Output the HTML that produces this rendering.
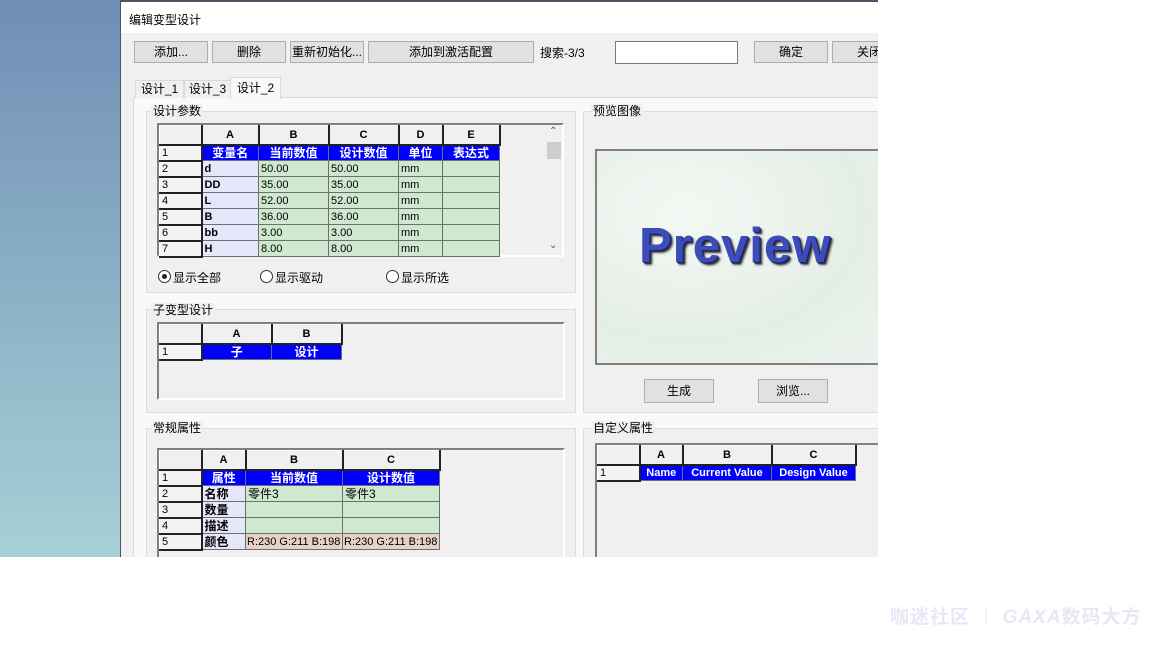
<!DOCTYPE html>
<html><head><meta charset="utf-8"><style>
*{margin:0;padding:0;box-sizing:border-box}
body{width:1152px;height:648px;background:#fff;position:relative;overflow:hidden;font-family:"Liberation Sans","Noto Sans CJK SC",sans-serif;font-size:12px;color:#000}
.bg{position:absolute;left:0;top:0;width:121px;height:557px;background:linear-gradient(#6f8eb5,#a6d0d6)}
.win{position:absolute;left:120px;top:0;width:758px;height:557px;background:#f0f0f0;border-left:1px solid #4a5566;border-top:2px solid #4a5566;overflow:hidden}
.title{position:absolute;left:0;top:0;width:100%;height:31px;background:#fff}
.a{position:absolute}
.btn{position:absolute;height:22px;background:#e1e1e1;border:1px solid #adadad;text-align:center;line-height:20px;font-size:12px}
.grp{position:absolute;border:1px solid #dcdcdc;background:#f0f0f0}
.glab{position:absolute;background:#f0f0f0;padding:0 2px;font-size:12px;line-height:14px}
table{position:absolute;border-collapse:collapse;table-layout:fixed;font-size:11px}
td{border:1px solid #6e6e6e;height:16px;padding:0 2px;white-space:nowrap;overflow:hidden;line-height:14px}
td.h{background:#f0f0f0;text-align:center;font-weight:bold;border-left:1px solid #fff;border-top:1px solid #fff;border-right:2px solid #222;border-bottom:2px solid #222;height:19px}
td.r{background:#f4f4f4;border-left:1px solid #fff;border-top:1px solid #fff;border-right:2px solid #222;border-bottom:2px solid #222}
td.b{background:#0000ff;color:#fff;font-weight:bold;text-align:center;font-size:12px}
td.l{background:#e6e6fa;font-weight:bold}
td.g{background:#cfe8d0}
td.c{background:#e6d3c6}
.gridbox{position:absolute;background:#f0f0f0;border:2px solid #808080;border-right-color:#fff;border-bottom-color:#fff}
.radio{position:absolute;width:13px;height:13px;border:1px solid #333;border-radius:50%;background:#fff}
</style></head><body>
<div class="bg"></div>
<div class="win">
 <div class="title"></div>
 <div class="a" style="left:8px;top:9px;font-size:12px">编辑变型设计</div>
 <div class="btn" style="left:13px;top:39px;width:74px">添加...</div>
 <div class="btn" style="left:91px;top:39px;width:74px">删除</div>
 <div class="btn" style="left:169px;top:39px;width:74px">重新初始化...</div>
 <div class="btn" style="left:247px;top:39px;width:166px">添加到激活配置</div>
 <div class="a" style="left:419px;top:42px">搜索-3/3</div>
 <div class="a" style="left:494px;top:39px;width:123px;height:23px;background:#fff;border:1px solid #7a7a7a"></div>
 <div class="btn" style="left:633px;top:39px;width:74px">确定</div>
 <div class="btn" style="left:711px;top:39px;width:74px">关闭</div>
 <div class="a" style="left:12px;top:95px;width:760px;height:470px;background:#f9f9f9;border:1px solid #d9d9d9"></div>
 <div class="a" style="left:14px;top:78px;width:49px;height:18px;border:1px solid #d9d9d9;border-bottom:none;background:#f0f0f0;text-align:center;line-height:17px">设计_1</div>
 <div class="a" style="left:63px;top:78px;width:47px;height:18px;border:1px solid #d9d9d9;border-bottom:none;background:#f0f0f0;text-align:center;line-height:17px">设计_3</div>
 <div class="a" style="left:109px;top:75px;width:51px;height:22px;border:1px solid #d9d9d9;border-bottom:none;background:#f9f9f9;text-align:center;line-height:20px">设计_2</div>

 <div class="grp" style="left:25px;top:109px;width:430px;height:182px"></div>
 <div class="glab" style="left:30px;top:102px">设计参数</div>
 <div class="gridbox" style="left:36px;top:121px;width:407px;height:134px"></div>
 <table style="left:38px;top:123px;width:340px">
  <col style="width:42px"><col style="width:57px"><col style="width:70px"><col style="width:70px"><col style="width:44px"><col style="width:57px">
  <tr><td class="h"></td><td class="h">A</td><td class="h">B</td><td class="h">C</td><td class="h">D</td><td class="h">E</td></tr>
  <tr><td class="r">1</td><td class="b">变量名</td><td class="b">当前数值</td><td class="b">设计数值</td><td class="b">单位</td><td class="b">表达式</td></tr>
  <tr><td class="r">2</td><td class="l">d</td><td class="g">50.00</td><td class="g">50.00</td><td class="g">mm</td><td class="g"></td></tr>
  <tr><td class="r">3</td><td class="l">DD</td><td class="g">35.00</td><td class="g">35.00</td><td class="g">mm</td><td class="g"></td></tr>
  <tr><td class="r">4</td><td class="l">L</td><td class="g">52.00</td><td class="g">52.00</td><td class="g">mm</td><td class="g"></td></tr>
  <tr><td class="r">5</td><td class="l">B</td><td class="g">36.00</td><td class="g">36.00</td><td class="g">mm</td><td class="g"></td></tr>
  <tr><td class="r">6</td><td class="l">bb</td><td class="g">3.00</td><td class="g">3.00</td><td class="g">mm</td><td class="g"></td></tr>
  <tr><td class="r">7</td><td class="l">H</td><td class="g">8.00</td><td class="g">8.00</td><td class="g">mm</td><td class="g"></td></tr>
 </table>
 <div class="a" style="left:424px;top:123px;width:17px;height:130px;background:#f0f0f0"></div>
 <div class="a" style="left:426px;top:140px;width:14px;height:17px;background:#cdcdcd"></div>
 <div class="a" style="left:428px;top:124px;font-size:10px;color:#555">&#8963;</div>
 <div class="a" style="left:428px;top:238px;font-size:10px;color:#555">&#8964;</div>
 <div class="radio" style="left:37px;top:268px"><div style="position:absolute;left:3px;top:3px;width:5px;height:5px;border-radius:50%;background:#222"></div></div>
 <div class="a" style="left:52px;top:267px">显示全部</div>
 <div class="radio" style="left:139px;top:268px"></div>
 <div class="a" style="left:154px;top:267px">显示驱动</div>
 <div class="radio" style="left:265px;top:268px"></div>
 <div class="a" style="left:280px;top:267px">显示所选</div>

 <div class="grp" style="left:25px;top:307px;width:430px;height:104px"></div>
 <div class="glab" style="left:30px;top:301px">子变型设计</div>
 <div class="gridbox" style="left:36px;top:320px;width:408px;height:78px"></div>
 <table style="left:38px;top:322px;width:182px">
  <col style="width:42px"><col style="width:70px"><col style="width:70px">
  <tr><td class="h"></td><td class="h">A</td><td class="h">B</td></tr>
  <tr><td class="r">1</td><td class="b">子</td><td class="b">设计</td></tr>
 </table>

 <div class="grp" style="left:25px;top:426px;width:430px;height:140px"></div>
 <div class="glab" style="left:30px;top:419px">常规属性</div>
 <div class="gridbox" style="left:36px;top:446px;width:408px;height:120px"></div>
 <table style="left:38px;top:448px;width:280px">
  <col style="width:42px"><col style="width:44px"><col style="width:97px"><col style="width:97px">
  <tr><td class="h"></td><td class="h">A</td><td class="h">B</td><td class="h">C</td></tr>
  <tr><td class="r">1</td><td class="b">属性</td><td class="b">当前数值</td><td class="b">设计数值</td></tr>
  <tr><td class="r">2</td><td class="l" style="font-size:12px">名称</td><td class="g" style="font-size:12px">零件3</td><td class="g" style="font-size:12px">零件3</td></tr>
  <tr><td class="r">3</td><td class="l" style="font-size:12px">数量</td><td class="g"></td><td class="g"></td></tr>
  <tr><td class="r">4</td><td class="l" style="font-size:12px">描述</td><td class="g"></td><td class="g"></td></tr>
  <tr><td class="r">5</td><td class="l" style="font-size:12px">颜色</td><td class="c" style="padding:0 1px">R:230 G:211 B:198</td><td class="c" style="padding:0 1px">R:230 G:211 B:198</td></tr>
 </table>

 <div class="grp" style="left:462px;top:109px;width:310px;height:302px"></div>
 <div class="glab" style="left:470px;top:102px">预览图像</div>
 <div class="a" style="left:474px;top:147px;width:300px;height:216px;border:2px solid #808080;border-right:none;background:radial-gradient(ellipse at 30% 30%,#f4f8f4,#e4eee6 60%,#edf3ef);overflow:hidden">
  <div style="position:absolute;left:42px;top:67px;font-family:'Liberation Sans',sans-serif;font-weight:bold;font-size:49px;letter-spacing:1px;color:#3c4cb8;text-shadow:1px 1px 0 #1a2270,2px 2px 1px #333,3px 3px 2px #555">Preview</div>
 </div>
 <div class="btn" style="left:523px;top:377px;width:70px;height:24px;line-height:22px">生成</div>
 <div class="btn" style="left:637px;top:377px;width:70px;height:24px;line-height:22px">浏览...</div>

 <div class="grp" style="left:462px;top:426px;width:310px;height:140px"></div>
 <div class="glab" style="left:470px;top:419px">自定义属性</div>
 <div class="gridbox" style="left:474px;top:441px;width:300px;height:125px;border-right:none"></div>
 <table style="left:476px;top:443px;width:258px">
  <col style="width:42px"><col style="width:43px"><col style="width:89px"><col style="width:84px">
  <tr><td class="h"></td><td class="h">A</td><td class="h">B</td><td class="h">C</td></tr>
  <tr><td class="r">1</td><td class="b" style="font-size:11px">Name</td><td class="b" style="font-size:11px">Current Value</td><td class="b" style="font-size:11px">Design Value</td></tr>
 </table>
</div>
<div class="a" style="left:890px;top:602px;font-size:19px;font-weight:bold;color:#e6e8f6;letter-spacing:1px;white-space:nowrap">咖迷社区 ｜ <i>GAXA</i>数码大方</div>
</body></html>
